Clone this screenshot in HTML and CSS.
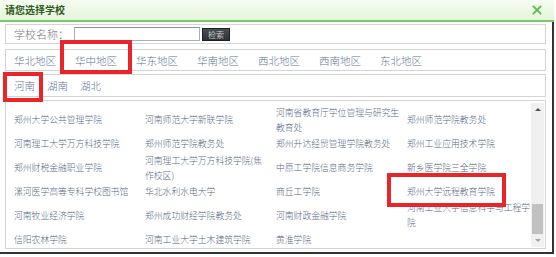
FILE: index.html
```html
<!DOCTYPE html>
<html lang="zh-CN">

<head>
    <meta charset="UTF-8">
    <meta name="viewport" content="width=device-width, initial-scale=1.0">
    <title>请您选择学校</title>
    <link rel="stylesheet" href="styles.css">
</head>

<body>
    <div class="dialog">
        <div class="dialog-title">
            <span>请您选择学校</span>
            <button class="close-button" aria-label="关闭">
                <svg xmlns="http://www.w3.org/2000/svg" width="10" height="10" viewBox="0 0 10 10" fill="none"
                    stroke="currentColor" stroke-width="1.8" stroke-linecap="square">
                    <line x1="1.5" y1="1.5" x2="8.5" y2="8.5"></line>
                    <line x1="8.5" y1="1.5" x2="1.5" y2="8.5"></line>
                </svg>
            </button>
        </div>

        <div class="dialog-body">
            <div class="panel search-row">
                <label for="schoolName">学校名称：</label>
                <input type="text" id="schoolName">
                <button class="search-button">检索</button>
            </div>

            <div class="panel region-row">
                <a>华北地区</a>
                <a>华中地区</a>
                <a>华东地区</a>
                <a>华南地区</a>
                <a>西北地区</a>
                <a>西南地区</a>
                <a>东北地区</a>
            </div>

            <div class="panel province-row">
                <a>河南</a>
                <a>湖南</a>
                <a>湖北</a>
            </div>

            <div class="panel school-list">
                <div class="school-grid">
                    <a>郑州大学公共管理学院</a>
                    <a>河南师范大学新联学院</a>
                    <a>河南省教育厅学位管理与研究生教育处</a>
                    <a>郑州师范学院教务处</a>

                    <a>河南理工大学万方科技学院</a>
                    <a>郑州师范学院教务处</a>
                    <a>郑州升达经贸管理学院教务处</a>
                    <a>郑州工业应用技术学院</a>

                    <a>郑州财税金融职业学院</a>
                    <a>河南理工大学万方科技学院(焦作校区)</a>
                    <a>中原工学院信息商务学院</a>
                    <a>新乡医学院三全学院</a>

                    <a>漯河医学高等专科学校图书馆</a>
                    <a>华北水利水电大学</a>
                    <a>商丘工学院</a>
                    <a>郑州大学远程教育学院</a>

                    <a>河南牧业经济学院</a>
                    <a>郑州成功财经学院教务处</a>
                    <a>河南财政金融学院</a>
                    <a>河南工业大学信息科学与工程学院</a>

                    <a>信阳农林学院</a>
                    <a>河南工业大学土木建筑学院</a>
                    <a>黄淮学院</a>
                </div>

                <div class="scrollbar">
                    <span class="scroll-arrow up"></span>
                    <span class="scroll-track"><span class="scroll-thumb"></span></span>
                    <span class="scroll-arrow down"></span>
                </div>
            </div>
        </div>

        <!-- annotation marks -->
        <div class="mark mark-region"></div>
        <div class="mark mark-province"></div>
        <div class="mark mark-school"></div>
    </div>
</body>

</html>
```

FILE: styles.css
```css
*,
*::before,
*::after {
    box-sizing: border-box;
    margin: 0;
    padding: 0;
}

:root {
    --title-green: #2f5a1c;
    --line-green: #79c96a;
    --close-green: #5dbb4f;
    --panel-border: #d4d4d4;
    --link: #5a6a86;
    --region: #62769a;
    --mark: #e8262a;
}

html,
body {
    width: 556px;
    height: 257px;
    overflow: hidden;
    background: #fff;
}

body {
    font-family: "Noto Sans CJK SC", "Noto Sans", sans-serif;
}

a {
    cursor: pointer;
}

.dialog {
    position: relative;
    width: 554px;
}

.dialog-title {
    height: 22px;
    display: flex;
    align-items: center;
    justify-content: space-between;
    padding: 0 12px 2px 5px;
    background: linear-gradient(#f6fcf2, #e4f4da);
    border-bottom: 2px solid var(--line-green);
    color: var(--title-green);
    font-size: 10px;
    font-weight: bold;
}

.close-button {
    background: none;
    border: none;
    color: var(--close-green);
    display: inline-flex;
    margin-top: 1px;
}

.dialog-body {
    padding: 2px 6px 3px 5px;
    border-right: 2px solid #333;
    border-bottom: 2px solid #333;
}

.panel {
    border: 1px solid var(--panel-border);
    background: #fff;
}

.search-row {
    height: 20px;
    display: flex;
    align-items: center;
    padding-left: 8px;
    font-size: 11px;
    font-weight: 300;
    color: #7a7a7a;
}

.search-row input {
    width: 126px;
    height: 14px;
    margin-left: 5px;
    border: 1px solid #a9b0b8;
    border-top-color: #8a9199;
}

.search-button {
    width: 28px;
    height: 13px;
    margin-left: 2px;
    background: linear-gradient(#4a4f55, #2e3236);
    border: 1px solid #1c1f22;
    color: #c9c9c9;
    font-family: inherit;
    font-size: 8px;
    line-height: 11px;
}

.region-row,
.province-row {
    display: flex;
    align-items: center;
    padding-left: 8px;
    font-size: 10.5px;
    font-weight: 300;
    color: var(--region);
}

.region-row {
    height: 22px;
    margin-top: 5px;
    gap: 19px;
}

.province-row {
    height: 23px;
    margin-top: 3px;
    gap: 12px;
}

.school-list {
    height: 149px;
    margin-top: 3px;
    display: flex;
}

.school-grid {
    flex: 1;
    overflow: hidden;
    display: grid;
    grid-template-columns: repeat(4, 124px);
    grid-auto-rows: minmax(18px, auto);
    column-gap: 7px;
    align-items: center;
    align-content: start;
    padding: 4px 0 0 8px;
    font-size: 8.8px;
    font-weight: 300;
    line-height: 15px;
    color: var(--link);
}

.scrollbar {
    width: 13px;
    margin: 2px 1px 1px 0;
    background: #f0f0f0;
    display: flex;
    flex-direction: column;
}

.scroll-arrow {
    height: 14px;
    display: flex;
    align-items: center;
    justify-content: center;
}

.scroll-arrow::before {
    content: "";
    border-left: 3px solid transparent;
    border-right: 3px solid transparent;
}

.scroll-arrow.up::before {
    border-bottom: 3px solid #505050;
}

.scroll-arrow.down {
    height: 13px;
}

.scroll-arrow.down::before {
    border-top: 3px solid #a3a3a3;
}

.scroll-track {
    flex: 1;
    padding: 88px 1px 0;
}

.scroll-thumb {
    display: block;
    height: 30px;
    background: #c1c1c1;
}

.mark {
    position: absolute;
    border: 4px solid var(--mark);
}

.mark-region {
    left: 60px;
    top: 40px;
    width: 72px;
    height: 34px;
}

.mark-province {
    left: 3px;
    top: 72px;
    width: 40px;
    height: 30px;
}

.mark-school {
    left: 387px;
    top: 173px;
    width: 119px;
    height: 34px;
}
```
